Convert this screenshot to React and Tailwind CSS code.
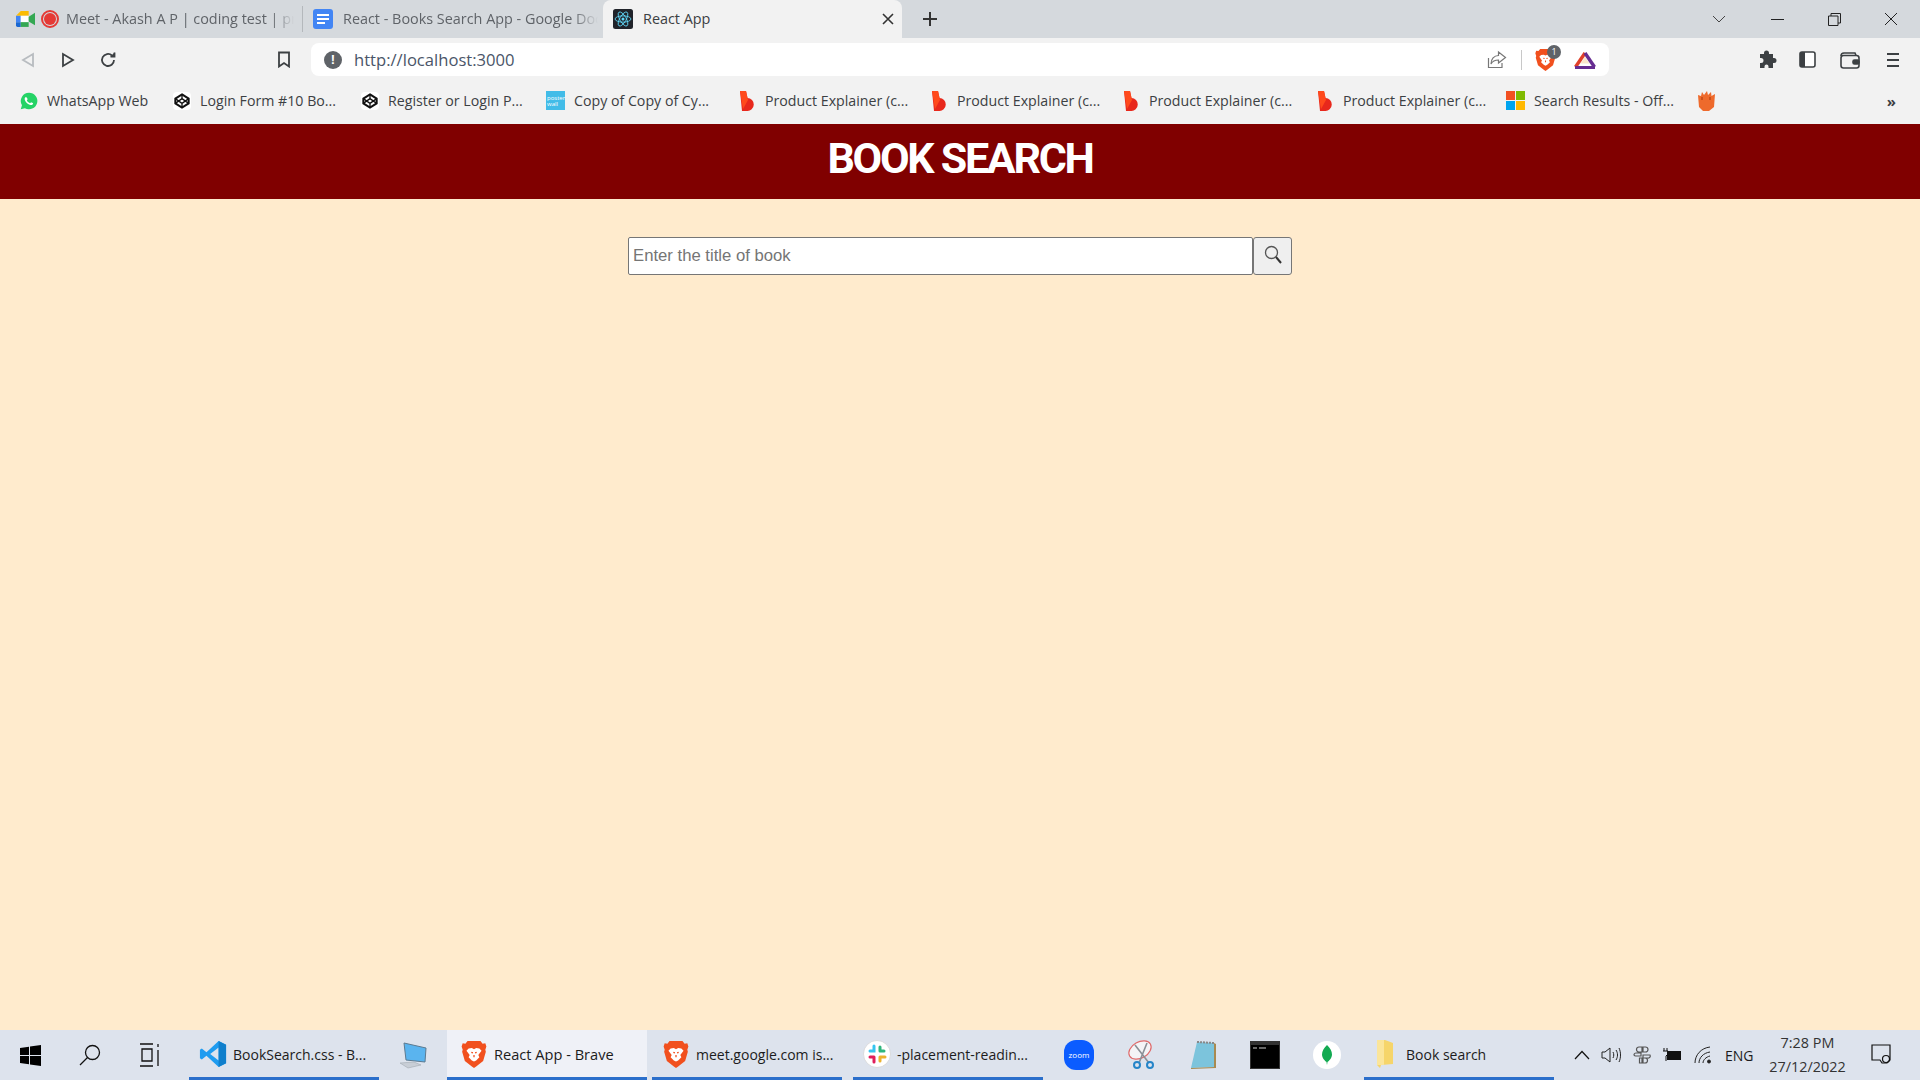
const Whatsapp = () => (
    <svg width="18" height="18" viewBox="0 0 24 24">
        <path d="M12 1a11 11 0 0 0-9.4 16.6L1 23l5.6-1.5A11 11 0 1 0 12 1z" fill="#25d366" />
        <path d="M8.2 6.5c-.4 0-1 .2-1.4.8-.6.9-.8 2.200-.2 3.600 1.100 2.500 3.300 5 6.300 6.200 1.700.7 3 .4 3.800-.3.6-.5.8-1.200.8-1.800 0-.3-2.400-1.500-2.700-1.500-.4 0-1 1.300-1.400 1.400-.9.100-3.600-2-4.200-3.500-.2-.4.9-1.200.9-1.700 0-.3-.9-2.700-1.900-2.700z" fill="#fff" />
    </svg>
);

const Codepen = () => (
    <span className="flex w-[18px] h-[18px] items-center justify-center bg-white rounded-sm">
        <svg width="16" height="16" viewBox="0 0 24 24" fill="none" stroke="#111" strokeWidth="3">
            <path d="M12 2l10 6.500v7L12 22 2 15.500v-7z" />
            <path d="M12 2v6.500M12 15.500V22M2 8.500l10 7 10-7M2 15.500l10-7 10 7" strokeWidth="2" />
        </svg>
    </span>
);

const Poster = () => (
    <span className="flex w-[19px] h-[19px] flex-col justify-center bg-[#42bce8] px-px text-[6px] leading-[6px] text-white font-['Open_Sans',sans-serif]">
        <span>poster</span>
        <span>wall</span>
    </span>
);

const Biteable = () => (
    <svg width="16" height="20" viewBox="0 0 16 20">
        <path d="M1 0h6l1.500 7A6.500 6.500 0 1 1 8 20H3z" fill="#e8281c" />
        <path d="M1 0h6l2 9-5 9z" fill="#ff4a1c" />
    </svg>
);

const Microsoft = () => (
    <span className="grid grid-cols-2 w-[19px] h-[19px] gap-px">
        <span className="bg-[#f25022]" />
        <span className="bg-[#7fba00]" />
        <span className="bg-[#00a4ef]" />
        <span className="bg-[#ffb900]" />
    </span>
);

const Bag = () => (
    <svg width="18" height="22" viewBox="0 0 18 22">
        <path d="M1 5l3 1 1-4 2 3 3-4 1 4 3-3 .5 4L18 4l-1 13-5 4H6l-4-4z" fill="#ee6a2c" />
        <path d="M5 7v3M13 7v3" stroke="#c24a14" strokeWidth="1.500" />
    </svg>
);

const BraveLogo = ({ size = 24 }) => (
    <svg width={size} height={size} viewBox="0 0 24 26">
        <path d="M6 1h12l2 2.500L22.500 3l1 3-1 3 .5 2-2.500 8.500L14 24.500 12 26l-2-1.500-6.500-5L1 11l.5-2-1-3 1-3L4 3.500z" fill="#f1501e" />
        <path d="M7 8l3-.5 2 1 2-1 3 .5 2 2-3 4 1 2-3 3-2 1-2-1-3-3 1-2-3-4z" fill="#fff" />
        <path d="M9.500 11.500l1.500.5M14.500 11.500l-1.500.5M12 14v2" stroke="#f1501e" strokeWidth="1.200" />
    </svg>
);

const bookmarks = [
    { label: 'WhatsApp Web', icon: <Whatsapp />, width: 'w-[153px]' },
    { label: 'Login Form #10 Bo...', icon: <Codepen />, width: 'w-[188px]' },
    { label: 'Register or Login P...', icon: <Codepen />, width: 'w-[186px]' },
    { label: 'Copy of Copy of Cy...', icon: <Poster />, width: 'w-[191px]' },
    { label: 'Product Explainer (c...', icon: <Biteable />, width: 'w-[192px]' },
    { label: 'Product Explainer (c...', icon: <Biteable />, width: 'w-[192px]' },
    { label: 'Product Explainer (c...', icon: <Biteable />, width: 'w-[194px]' },
    { label: 'Product Explainer (c...', icon: <Biteable />, width: 'w-[191px]' },
    { label: 'Search Results - Off...', icon: <Microsoft />, width: 'w-[191px]' },
];

function TabStrip() {
    return (
        <div className="flex h-[38px] bg-[#d5d9dd] text-[14.4px] text-[#5f6368]">
            <div className="flex w-[303px] items-center pl-[16px] pr-[8px] border-r border-[#b4b8bc] my-[6px]">
                <svg width="19" height="16" viewBox="0 0 24 20" className="shrink-0">
                    <path d="M0 6l6-6h10v6z" fill="#fbbc04" />
                    <path d="M0 6h6v8H0z" fill="#4285f4" />
                    <path d="M0 14h6v6H2a2 2 0 0 1-2-2z" fill="#1967d2" />
                    <path d="M6 6h10v8H6z" fill="#fff" />
                    <path d="M6 14h10v6H6z" fill="#34a853" />
                    <path d="M16 7l8-5v16l-8-5z" fill="#34a853" />
                </svg>
                <span className="ml-[6px] w-[18px] h-[18px] rounded-full border-2 border-[#e53935] flex items-center justify-center shrink-0">
                    <span className="w-[12px] h-[12px] rounded-full bg-[#e53935]" />
                </span>
                <span className="ml-[7px] pb-[1px] overflow-hidden whitespace-nowrap [mask-image:linear-gradient(to_right,black_90%,transparent)]">Meet - Akash A P | coding test | practice</span>
            </div>
            <div className="flex w-[300px] items-center pl-[10px] pr-[5px] my-[6px]">
                <svg width="20" height="20" viewBox="0 0 20 20" className="shrink-0">
                    <rect width="20" height="20" rx="3" fill="#4285f4" />
                    <path d="M4 6h12M4 10h12M4 14h8" stroke="#fff" strokeWidth="2" />
                </svg>
                <span className="ml-[10px] pb-[1px] overflow-hidden whitespace-nowrap [mask-image:linear-gradient(to_right,black_90%,transparent)]">React - Books Search App - Google Docs</span>
            </div>
            <div className="flex w-[299px] items-center pl-[10px] pr-[8px] bg-[#f2f2f2] rounded-t-lg text-[#3c4043]">
                <svg width="20" height="20" viewBox="-12 -12 24 24" className="shrink-0">
                    <rect x="-12" y="-12" width="24" height="24" rx="3" fill="#20232a" />
                    <g fill="none" stroke="#61dafb" strokeWidth="1">
                        <ellipse rx="9.500" ry="3.800" />
                        <ellipse rx="9.500" ry="3.800" transform="rotate(60)" />
                        <ellipse rx="9.500" ry="3.800" transform="rotate(120)" />
                    </g>
                    <circle r="1.800" fill="#61dafb" />
                </svg>
                <span className="ml-[10px] pb-[1px] flex-1">React App</span>
                <svg width="12" height="12" viewBox="0 0 12 12" stroke="#333" strokeWidth="1.600">
                    <path d="M1 1l10 10M11 1L1 11" />
                </svg>
            </div>
            <div className="flex w-[56px] items-center justify-center">
                <svg width="16" height="16" viewBox="0 0 16 16" stroke="#333" strokeWidth="2">
                    <path d="M8 1v14M1 8h14" />
                </svg>
            </div>
            <div className="flex-1" />
            <div className="flex w-[58px] items-center justify-center">
                <svg width="14" height="8" viewBox="0 0 14 8" fill="none" stroke="#444">
                    <path d="M1 1l6 6 6-6" />
                </svg>
            </div>
            <div className="flex w-[58px] items-center justify-center">
                <span className="w-[13px] h-px bg-[#222]" />
            </div>
            <div className="flex w-[56px] items-center justify-center">
                <svg width="13" height="13" viewBox="0 0 13 13" fill="none" stroke="#222">
                    <path d="M.5 3h9.500v9.500H.5zM3 3V.5h9.500V10H10" />
                </svg>
            </div>
            <div className="flex w-[58px] items-center justify-center">
                <svg width="14" height="14" viewBox="0 0 14 14" stroke="#222">
                    <path d="M1 1l12 12M13 1L1 13" />
                </svg>
            </div>
        </div>
    );
}

function Toolbar() {
    return (
        <div className="flex h-[40px] items-center bg-[#f2f2f2] pt-[3px]">
            <div className="flex w-[311px] items-center shrink-0">
                <svg width="14" height="16" viewBox="0 0 14 16" fill="none" stroke="#b8bcc0" strokeWidth="1.800" className="ml-[21px]">
                    <path d="M12 2v12L2 8z" />
                </svg>
                <svg width="14" height="16" viewBox="0 0 14 16" fill="none" stroke="#3c4043" strokeWidth="1.800" className="ml-[26px]">
                    <path d="M2 2v12l10-6z" />
                </svg>
                <svg width="18" height="18" viewBox="0 0 18 18" fill="none" stroke="#3c4043" strokeWidth="1.800" className="ml-[24px]">
                    <path d="M15 9a6 6 0 1 1-2-4.500" />
                    <path d="M15.500 1.500v4h-4" fill="#3c4043" />
                </svg>
                <svg width="14" height="17" viewBox="0 0 14 17" fill="none" stroke="#3c4043" strokeWidth="1.800" className="ml-[160px]">
                    <path d="M2 1.500h10v14l-5-3.500-5 3.500z" />
                </svg>
            </div>
            <div className="flex w-[1298px] h-[33px] items-center bg-white rounded-lg pl-[13px] pr-[12px]">
                <span className="flex w-[18px] h-[18px] items-center justify-center rounded-full bg-[#5f6368] text-white text-[13px] font-bold font-['Liberation_Sans',sans-serif]">!</span>
                <span className="ml-[12px] pt-[1px] flex-1 text-[16.6px] text-[#4a5568]">http://localhost:3000</span>
                <svg width="20" height="19" viewBox="0 0 20 19" fill="none" stroke="#777" strokeWidth="1.200">
                    <path d="M1.500 8v9.500H15V13" />
                    <path d="M11.500 2l7 5.500-7 5.500V10C8 10 5.500 11 4 14c0-5 3-8.500 7.500-8.500z" />
                </svg>
                <span className="ml-[14px] w-px h-[20px] bg-[#c8c8c8]" />
                <span className="relative ml-[12px] flex">
                    <BraveLogo size={23} />
                    <span className="absolute -top-[3px] left-[13px] flex w-[14px] h-[14px] items-center justify-center rounded-full bg-[#5f6368] text-white text-[9px]">1</span>
                </span>
                <svg width="24" height="20" viewBox="0 0 24 20" fill="none" className="ml-[16px]">
                    <path d="M2.500 17l9.500-14" stroke="#e0402a" strokeWidth="3.400" />
                    <path d="M12 3l9.500 14" stroke="#662d91" strokeWidth="3.400" />
                    <path d="M2 17.500h20" stroke="#662d91" strokeWidth="3" />
                    <path d="M7.500 13.500h9L12 7z" fill="#f0a030" opacity=".25" />
                </svg>
            </div>
            <div className="flex flex-1 items-center pl-[148px]">
                <svg width="20" height="20" viewBox="0 0 20 20" fill="#3c4043">
                    <path d="M7 3a2.500 2.500 0 0 1 5 0v1h4v4h1a2.500 2.500 0 0 1 0 5h-1v5h-4.500v-1.500a2 2 0 0 0-4 0V18H3v-5h1a2.500 2.500 0 0 0 0-5H3V4h4z" />
                </svg>
                <svg width="17" height="17" viewBox="0 0 17 17" className="ml-[22px]">
                    <rect x="1" y="1" width="15" height="15" rx="2" fill="#fff" stroke="#3c4043" strokeWidth="1.600" />
                    <rect x="1" y="1" width="5" height="15" fill="#3c4043" />
                </svg>
                <svg width="20" height="18" viewBox="0 0 20 18" fill="none" stroke="#3c4043" strokeWidth="1.600" className="ml-[24px]">
                    <path d="M1 5a3 3 0 0 1 3-3h11l1 2.500" />
                    <rect x="1" y="4.500" width="18" height="12.500" rx="2.500" />
                    <rect x="13" y="9" width="6" height="4" rx="1.500" fill="#3c4043" />
                </svg>
                <svg width="14" height="16" viewBox="0 0 14 16" stroke="#3c4043" strokeWidth="1.800" className="ml-[26px]">
                    <path d="M1 2h12M1 8h12M1 14h12" />
                </svg>
            </div>
        </div>
    );
}

function BookmarksBar() {
    return (
        <div className="flex h-[46px] items-center bg-[#f2f2f2] pl-[19px] text-[14.2px] text-[#3c4043]">
            {bookmarks.map((b, i) => (
                <div key={i} className={`flex items-center gap-[9px] shrink-0 ${b.width}`}>
                    <span className="flex w-[19px] justify-center shrink-0">{b.icon}</span>
                    <span className="whitespace-nowrap">{b.label}</span>
                </div>
            ))}
            <Bag />
            <span className="ml-auto mr-[24px] text-[15px] font-bold leading-none">»</span>
        </div>
    );
}

function TaskItem({ icon, label, active }) {
    return (
        <div className={`flex h-[50px] items-center border-b-[3px] border-[#2b6fcb] text-[#1c1c1c] ${active ? 'w-[200px] pl-[13px] bg-[#eff1f7] text-[14.6px]' : 'w-[190px] pl-[10px] text-[14px]'}`}>
            <span className="flex w-[28px] justify-center shrink-0">{icon}</span>
            <span className="ml-[6px] pt-[2px] whitespace-nowrap">{label}</span>
        </div>
    );
}

function Taskbar() {
    return (
        <div className="flex h-[50px] items-center bg-[#dde3ed]">
            <div className="flex w-[60px] justify-center">
                <svg width="21" height="21" viewBox="0 0 21 21" fill="#000">
                    <path d="M0 3l9-1.300V10H0zM10 1.500L21 0v10H10zM0 11h9v8.300L0 18zM10 11h11v10l-11-1.500z" />
                </svg>
            </div>
            <div className="flex w-[60px] justify-center">
                <svg width="22" height="22" viewBox="0 0 22 22" fill="none" stroke="#111" strokeWidth="1.300">
                    <circle cx="13.500" cy="8.500" r="7" />
                    <path d="M8.500 13.500L1 21" />
                </svg>
            </div>
            <div className="flex w-[60px] justify-center">
                <svg width="22" height="24" viewBox="0 0 22 24" fill="none" stroke="#111" strokeWidth="1.300">
                    <path d="M1 1h13M1 23h13M3 6h10v12H3zM19 1v3M19 7v16" />
                </svg>
            </div>
            <div className="w-[9px]" />
            <TaskItem label="BookSearch.css - B..." icon={
                <svg width="30" height="30" viewBox="0 0 30 30">
                    <path d="M21 1l8 4v20l-8 4L8 17l-5 4-2-1.500V10.500L3 9l5 4z" fill="#1f9cf0" />
                    <path d="M21 8v14l-9-7z" fill="#dde3ed" />
                    <path d="M21 1l8 4v20l-8 4z" fill="#0f7fcc" />
                </svg>
            } />
            <div className="flex w-[68px] justify-center">
                <svg width="30" height="30" viewBox="0 0 30 30">
                    <path d="M6 3l22 5-1 14-19-2z" fill="#5ab4ef" stroke="#5c7a90" />
                    <path d="M2 23l14-1 7 3-13 3z" fill="#c8ced6" stroke="#98a0a8" strokeWidth=".5" />
                </svg>
            </div>
            <TaskItem active label="React App - Brave" icon={<BraveLogo size={28} />} />
            <div className="w-[5px]" />
            <TaskItem label="meet.google.com is..." icon={<BraveLogo size={28} />} />
            <div className="w-[11px]" />
            <TaskItem label="-placement-readin..." icon={
                <svg width="28" height="28" viewBox="0 0 28 28">
                    <circle cx="14" cy="14" r="13.500" fill="#fff" stroke="#ccc" strokeWidth=".6" />
                    <path d="M11 6v5H7" stroke="#36c5f0" strokeWidth="3" fill="none" strokeLinecap="round" />
                    <path d="M17 11V7M17 11h4" stroke="#2eb67d" strokeWidth="3" fill="none" strokeLinecap="round" />
                    <path d="M17 17h5M17 17v4" stroke="#ecb22e" strokeWidth="3" fill="none" strokeLinecap="round" />
                    <path d="M11 17H7M11 17v5" stroke="#e01e5a" strokeWidth="3" fill="none" strokeLinecap="round" />
                </svg>
            } />
            <div className="w-[5px]" />
            <div className="flex w-[62px] justify-center">
                <span className="flex w-[30px] h-[30px] items-center justify-center rounded-[12px] bg-[#0b5cff] text-white text-[8px]">zoom</span>
            </div>
            <div className="flex w-[62px] justify-center">
                <svg width="30" height="32" viewBox="0 0 30 32" fill="none">
                    <ellipse cx="14" cy="11" rx="12" ry="8" transform="rotate(-30 14 11)" stroke="#e06a6a" strokeWidth="1.200" fill="#f4f4f6" />
                    <path d="M9 6l14 18M21 4L13 24" stroke="#8a8f96" strokeWidth="1.600" />
                    <circle cx="11" cy="26" r="3" stroke="#2585c9" strokeWidth="2" />
                    <circle cx="24" cy="26" r="3" stroke="#2585c9" strokeWidth="2" />
                </svg>
            </div>
            <div className="flex w-[62px] justify-center">
                <svg width="28" height="32" viewBox="0 0 28 32">
                    <path d="M8 3l17 1v24l-23 1z" fill="#7cc4dc" />
                    <path d="M25 4l2 1v24l-25 1v-1l23-1z" fill="#a88a50" />
                    <path d="M8 3l17 1" stroke="#888" strokeWidth="2" strokeDasharray="2 1" />
                </svg>
            </div>
            <div className="flex w-[62px] justify-center">
                <svg width="30" height="28" viewBox="0 0 30 28">
                    <rect width="30" height="28" fill="#333" />
                    <rect x="1" y="4" width="28" height="23" fill="#000" />
                    <path d="M3 7h4M9 7h7" stroke="#ccc" />
                </svg>
            </div>
            <div className="flex w-[62px] justify-center">
                <span className="flex w-[28px] h-[28px] items-center justify-center rounded-full bg-white">
                    <svg width="10" height="20" viewBox="0 0 10 20">
                        <path d="M5 0c3 3 5 6 5 9.500S7 16 5.500 17L5 20l-.5-3C3 16 0 13 0 9.500S2 3 5 0z" fill="#13aa52" />
                    </svg>
                </span>
            </div>
            <div className="w-[6px]" />
            <div className="flex w-[190px] h-[50px] items-center border-b-[3px] border-[#2b6fcb] pl-[12px] text-[14px] text-[#1c1c1c]">
                <svg width="18" height="30" viewBox="0 0 18 30" className="shrink-0">
                    <path d="M1 1h8l8 3v21l-12 1-1 3-3-3z" fill="#f6d56a" />
                    <path d="M1 1h7v25H1z" fill="#fbe59a" />
                </svg>
                <span className="ml-[12px] pt-[2px]">Book search</span>
            </div>
            <div className="flex flex-1 items-center text-[#1c1c1c]">
                <svg width="16" height="10" viewBox="0 0 16 10" fill="none" stroke="#111" strokeWidth="1.200" className="ml-[20px]">
                    <path d="M1 9l7-7.500L15 9" />
                </svg>
                <svg width="20" height="18" viewBox="0 0 20 18" fill="none" stroke="#222" className="ml-[11px]">
                    <path d="M1 6h3l5-4v14l-5-4H1z" />
                    <path d="M12 6c1 2 1 4 0 6M15 4c2 3 2 7 0 10M18 2c2 4 2 10 0 14" />
                </svg>
                <svg width="20" height="20" viewBox="0 0 20 20" fill="none" stroke="#555" strokeWidth="1.200" className="ml-[11px]">
                    <path d="M7 2h3v5H7a2.500 2.500 0 0 1 0-5zM10 18H7.500V13H10zM2 10a2 2 0 0 1 2-2h5v3H4a2 2 0 0 1-2-1zM11 2h2.500a2 2 0 0 1 0 5H11zM18 10a2 2 0 0 1-2 3h-5v-3zM13 13a2.500 2.500 0 0 1 0 5h-2v-5z" />
                </svg>
                <svg width="20" height="14" viewBox="0 0 20 14" className="ml-[10px]">
                    <path d="M2 0v3M5 0v3M1 3h5v3L4 8v5" stroke="#111" fill="none" />
                    <rect x="5" y="3" width="14" height="9" fill="#111" />
                </svg>
                <svg width="20" height="18" viewBox="0 0 20 18" fill="none" stroke="#222" className="ml-[12px]">
                    <path d="M1 17C1 9 7 2 16 1M5 17c0-5 4-10 11-11M9 17c0-3 3-6 7-7" />
                    <circle cx="15" cy="15.500" r="1.500" fill="#222" />
                </svg>
                <span className="ml-[11px] text-[14px]">ENG</span>
                <div className="ml-[14px] flex w-[80px] flex-col items-center text-[14.4px] leading-[24px] text-[#333]">
                    <span>7:28 PM</span>
                    <span>27/12/2022</span>
                </div>
                <svg width="20" height="22" viewBox="0 0 20 22" fill="none" stroke="#111" strokeWidth="1.200" className="ml-[23px]">
                    <path d="M1 1h18v15l-3 3H11l-2-3H1z" />
                    <circle cx="15" cy="15" r="3.500" />
                </svg>
            </div>
        </div>
    );
}

export default function App() {
    return (
        <div className="flex flex-col h-screen overflow-hidden font-['Open_Sans',sans-serif]">
            <TabStrip />
            <Toolbar />
            <BookmarksBar />

            <div className="flex h-[75px] items-center justify-center bg-[#800000] pb-[6px]">
                <h1 className="text-[43px] font-bold tracking-[-2.300px] text-white leading-none font-['Roboto',sans-serif]">BOOK SEARCH</h1>
            </div>

            <div className="flex flex-1 justify-center bg-[#ffebcd] pt-[38px]">
                <div className="flex h-[38px]">
                    <input placeholder="Enter the title of book" className="w-[625px] h-[38px] bg-white border border-[#767676] rounded-[2px] px-[4px] pb-[1px] text-[16.7px] font-['Liberation_Sans',sans-serif] placeholder:text-[#757575] outline-none" />
                    <button className="flex w-[39px] h-[38px] items-center justify-center bg-[#efefef] border border-[#767676] rounded-[3px] pb-[3px]">
                        <svg width="18" height="19" viewBox="0 0 18 19" fill="none" stroke="#555" strokeWidth="1.300">
                            <circle cx="7.500" cy="7.500" r="6" />
                            <path d="M12 12l5 6" stroke="#333" strokeWidth="2" />
                        </svg>
                    </button>
                </div>
            </div>

            <Taskbar />
        </div>
    );
}
